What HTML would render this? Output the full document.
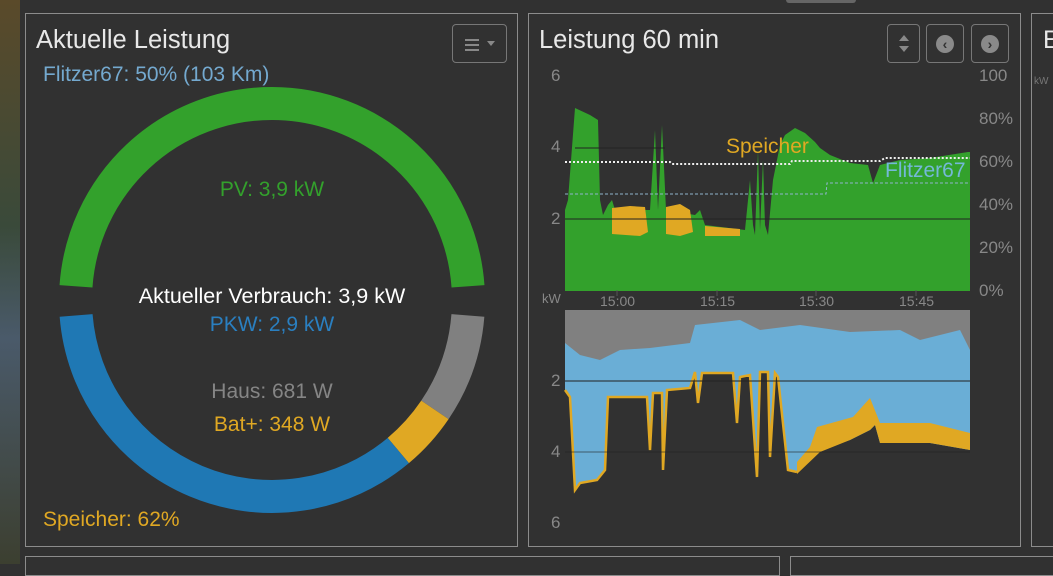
<!DOCTYPE html>
<html><head><meta charset="utf-8"><style>
html,body{margin:0;padding:0;width:1053px;height:564px;overflow:hidden;background:#313131;font-family:"Liberation Sans",sans-serif;}
.p{position:absolute;border:1px solid #8c8c8c;box-sizing:border-box;}
.t{position:absolute;white-space:nowrap;}
.btn{position:absolute;border:1px solid #777;border-radius:4px;box-sizing:border-box;}
</style></head><body>
<div style="position:absolute;left:0;top:0;width:20px;height:564px;background:linear-gradient(#5a4a2a,#3a4a3a 40%,#4a5a6a 60%,#3c3f30)"></div>
<div style="position:absolute;left:786px;top:0;width:70px;height:3px;background:#666;border-radius:0 0 3px 3px"></div>
<div class="p" style="left:25px;top:13px;width:493px;height:534px"></div>
<div class="p" style="left:528px;top:13px;width:493px;height:534px"></div>
<div class="p" style="left:1031px;top:13px;width:40px;height:534px"></div>
<div class="p" style="left:25px;top:556px;width:755px;height:20px"></div>
<div class="p" style="left:790px;top:556px;width:300px;height:20px"></div>

<div class="t" style="left:36px;top:26px;font-size:25.5px;color:#e8e8e8">Aktuelle Leistung</div>
<div class="t" style="left:43px;top:63px;font-size:21px;color:#74a9cf">Flitzer67: 50% (103 Km)</div>
<div class="btn" style="left:452px;top:24px;width:55px;height:39px">
<div style="position:absolute;left:12px;top:14px;width:14px;height:2px;background:#888"></div>
<div style="position:absolute;left:12px;top:19px;width:14px;height:2px;background:#888"></div>
<div style="position:absolute;left:12px;top:24px;width:14px;height:2px;background:#888"></div>
<div class="t" style="left:34px;top:16px;border:4px solid transparent;border-top:5px solid #888;width:0;height:0"></div></div>

<svg style="position:absolute;left:0;top:0" width="1053" height="564">
<g fill="none" stroke-width="33">
<path d="M76,286.3 A196.5,196.5 0 0 1 272,103.5 A196.5,196.5 0 0 1 468,286.3" stroke="#33a12c"/>
<path d="M467.9,315.4 A196.5,196.5 0 0 1 434.9,409.9" stroke="#808080"/>
<path d="M434.9,409.9 A196.5,196.5 0 0 1 398.3,450.5" stroke="#e0a823"/>
<path d="M398.3,450.5 A196.5,196.5 0 0 1 76.1,315.4" stroke="#1f78b4"/>
</g>
<!-- top chart -->
<polygon fill="#33a12c" points="565,290 565,210 568,200 575,108 590,115 598,120 600,200 603,215 608,205 612,200 615,210 650,210 655,130 658,210 662,125 666,210 695,215 700,210 705,225 745,230 750,180 753,225 755,235 758,150 760,230 763,160 765,225 768,235 773,180 780,145 785,135 795,128 805,133 815,142 820,148 830,155 850,163 868,165 873,183 880,165 900,160 930,158 968,152 970,152 970,290"/>
<polygon fill="#e0a823" points="612,208 630,206 645,207 648,232 640,236 612,234"/>
<polygon fill="#e0a823" points="666,207 680,204 690,210 693,232 680,236 666,234"/>
<polygon fill="#e0a823" points="705,226 740,229 740,236 705,236"/>
<line x1="565" y1="219" x2="970" y2="219" stroke="#222" stroke-width="1"/>
<line x1="575" y1="148" x2="665" y2="148" stroke="#222" stroke-width="1"/>
<polyline fill="none" stroke="#eee" stroke-width="2" stroke-dasharray="2,2" points="565,162 670,162 672,164 790,164 792,161 880,161 885,158 970,158"/>
<polyline fill="none" stroke="#8fb4cc" stroke-width="1" stroke-dasharray="3,2" points="565,194 826,194 827,183 970,183"/>
<line x1="565" y1="290" x2="970" y2="290" stroke="#33a12c" stroke-width="2"/>
<g stroke="#555"><line x1="617" y1="290" x2="617" y2="296"/><line x1="717" y1="290" x2="717" y2="296"/><line x1="816" y1="290" x2="816" y2="296"/><line x1="916" y1="290" x2="916" y2="296"/></g>
<!-- bottom chart -->
<rect x="565" y="310" width="405" height="60" fill="#808080"/>
<polygon fill="#6aaed6" points="565,343 580,355 600,360 620,350 650,348 690,343 695,325 740,320 760,330 800,325 850,332 900,330 920,340 960,330 970,350 970,450 930,443 880,443 875,425 870,430 850,440 820,450 797,472 788,470 778,377 775,373 770,457 768,372 760,372 757,477 750,375 740,377 737,423 733,373 702,373 698,403 695,372 690,388 667,390 663,470 662,393 653,393 650,450 647,397 608,397 605,470 597,480 580,483 575,490 570,397 565,390"/>
<polyline fill="none" stroke="#e0a823" stroke-width="2.5" points="565,390 570,397 575,490 580,483 597,480 605,470 608,397 647,397 650,450 653,393 662,393 663,470 667,390 690,388 695,372 698,403 702,373 733,373 737,423 740,377 750,375 757,477 760,372 768,372 770,457 775,373 778,377 788,470 797,472"/>
<polygon fill="#e0a823" points="797,462 810,447 817,427 853,417 870,398 880,423 930,423 970,433 970,450 930,443 880,443 875,425 870,430 850,440 820,452 797,474"/>
<line x1="565" y1="381" x2="970" y2="381" stroke="#222"/>
<line x1="565" y1="452" x2="970" y2="452" stroke="#222" stroke-opacity=".6"/>
</svg>

<div class="t" style="left:0;width:544px;text-align:center;top:178px;font-size:21px;color:#33a12c">PV: 3,9 kW</div>
<div class="t" style="left:0;width:544px;text-align:center;top:284px;font-size:21.5px;color:#fff">Aktueller Verbrauch: 3,9 kW</div>
<div class="t" style="left:0;width:544px;text-align:center;top:313px;font-size:21px;color:#2a7fc0">PKW: 2,9 kW</div>
<div class="t" style="left:0;width:544px;text-align:center;top:380px;font-size:21px;color:#858585">Haus: 681 W</div>
<div class="t" style="left:0;width:544px;text-align:center;top:413px;font-size:21px;color:#e0a823">Bat+: 348 W</div>
<div class="t" style="left:43px;top:508px;font-size:21px;color:#e0a823">Speicher: 62%</div>

<div class="t" style="left:539px;top:26px;font-size:25.5px;color:#e8e8e8">Leistung 60 min</div>
<div class="btn" style="left:887px;top:24px;width:33px;height:39px"><div class="t" style="left:11px;top:10px;border:5px solid transparent;border-bottom:6px solid #888;border-top:0;width:0"></div><div class="t" style="left:11px;top:21px;border:5px solid transparent;border-top:6px solid #888;border-bottom:0;width:0"></div></div>
<div class="btn" style="left:926px;top:24px;width:38px;height:39px"><div class="t" style="left:9px;top:10px;width:18px;height:18px;border-radius:50%;background:#8a8a8a;color:#333;font-size:14px;font-weight:bold;line-height:18px;text-align:center">‹</div></div>
<div class="btn" style="left:971px;top:24px;width:38px;height:39px"><div class="t" style="left:9px;top:10px;width:18px;height:18px;border-radius:50%;background:#8a8a8a;color:#333;font-size:14px;font-weight:bold;line-height:18px;text-align:center">›</div></div>
<div class="t" style="left:1043px;top:26px;font-size:25px;color:#e8e8e8">E</div>
<div class="t" style="left:1034px;top:76px;font-size:10px;color:#777">kW</div>

<div class="t" style="left:726px;top:135px;font-size:21px;color:#e0a823">Speicher</div>
<div class="t" style="left:885px;top:159px;font-size:21px;color:#74b8d8">Flitzer67</div>

<div style="position:absolute;left:0;top:0;font-size:17px;color:#888">
<div class="t" style="left:551px;top:66px">6</div>
<div class="t" style="left:551px;top:137px">4</div>
<div class="t" style="left:551px;top:209px">2</div>
<div class="t" style="left:542px;top:291px;font-size:13px">kW</div>
<div class="t" style="left:600px;top:293px;font-size:14px">15:00</div>
<div class="t" style="left:700px;top:293px;font-size:14px">15:15</div>
<div class="t" style="left:799px;top:293px;font-size:14px">15:30</div>
<div class="t" style="left:899px;top:293px;font-size:14px">15:45</div>
<div class="t" style="left:979px;top:66px">100</div>
<div class="t" style="left:979px;top:109px">80%</div>
<div class="t" style="left:979px;top:152px">60%</div>
<div class="t" style="left:979px;top:195px">40%</div>
<div class="t" style="left:979px;top:238px">20%</div>
<div class="t" style="left:979px;top:281px">0%</div>
<div class="t" style="left:551px;top:371px">2</div>
<div class="t" style="left:551px;top:442px">4</div>
<div class="t" style="left:551px;top:513px">6</div>
</div>
</body></html>
